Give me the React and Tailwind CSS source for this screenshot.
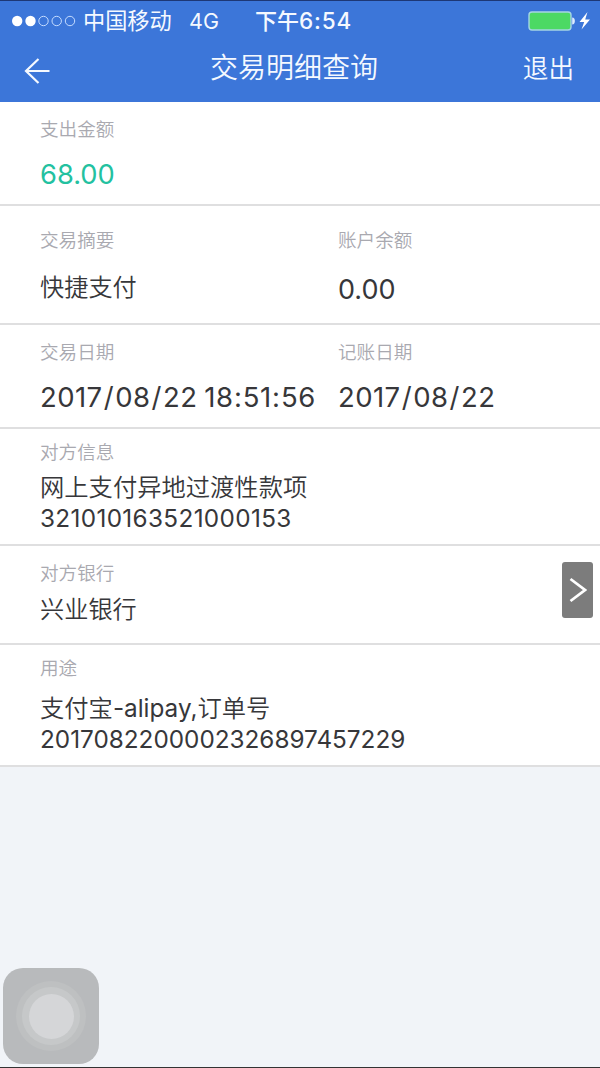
import React from 'react';

const Label = ({ children }) => (
  <div className="h-6 text-[18.6px] leading-6 font-[350] text-[#a9a9b0] whitespace-nowrap">{children}</div>
);

const Section = ({ className, children }) => (
  <section className={`relative border-b-2 border-[#dfdfe0] bg-white pl-10 ${className}`}>{children}</section>
);

// gives the slashes and colons a little more room than the digits
const DateText = ({ value }) => (
  <div className="mt-[17px] text-[27.5px] leading-8 tracking-[0.4px] [word-spacing:-1.2px] whitespace-nowrap">
    {value.split(/([/:])/).map((part, i) => (
      <span key={i} className={part === '/' ? 'mx-[1.2px]' : part === ':' ? 'mx-[0.6px]' : ''}>{part}</span>
    ))}
  </div>
);

const StatusBar = () => (
  <div className="flex h-10 items-center text-[22px] leading-10 whitespace-nowrap">
    <svg className="ml-3 shrink-0" width="64" height="12" viewBox="0 0 64 12" fill="none">
      <circle cx="5.2" cy="6" r="5.2" fill="#fff" />
      <circle cx="18.5" cy="6" r="5.2" fill="#fff" />
      <circle cx="31.5" cy="6" r="4.7" stroke="#c5dcff" />
      <circle cx="44.7" cy="6" r="4.7" stroke="#c5dcff" />
      <circle cx="58" cy="6" r="4.7" stroke="#c5dcff" />
    </svg>
    <span className="ml-[7px] w-[89px] text-[22.2px]">中国移动</span>
    <span className="ml-[17px] w-[66px] text-[21.5px]">4G</span>
    <span className="font-medium">
      下午<span className="text-[22.5px] tracking-[0.9px]">6:54</span>
    </span>
    <svg className="ml-auto mr-[8px] shrink-0" width="64" height="20" viewBox="0 0 64 20">
      <rect x="1" y="1" width="42" height="18" rx="3" fill="#4cd964" stroke="#a5d5e4" strokeWidth="1.4" />
      <path d="M44.2 6.5 C47.8 6.5 47.8 13.5 44.2 13.5 Z" fill="#dcebff" />
      <path d="M59.5 1 L51.5 11 H56.2 L53.5 18.5 L62 8.5 H57.2 Z" fill="#fff" />
    </svg>
  </div>
);

const Header = () => (
  <header className="h-[102px] border-t border-[#1d3775] bg-[#3c76d9] text-[#f5f9ff]">
    <StatusBar />
    <div className="grid h-[54px] grid-cols-[1fr_auto_1fr] items-center font-[350] whitespace-nowrap">
      <svg className="mt-1.5 ml-6" width="27" height="26" viewBox="0 0 27 26" fill="none" stroke="currentColor" strokeWidth="2.2">
        <path d="M25.5 13 H2 M14.5 1 L2 13 L14.5 25" />
      </svg>
      <h1 className="ml-[-12px] text-[28px] leading-9 font-[350]">交易明细查询</h1>
      <button className="mt-px mr-[26px] justify-self-end text-[25.6px] leading-9">退出</button>
    </div>
  </header>
);

export default function App() {
  return (
    <div className="relative flex h-[1068px] w-[600px] flex-col overflow-hidden border-b border-[#333] bg-[#f1f4f8] font-[Inter,'Noto_Sans_CJK_SC',sans-serif] text-[#37373a]">
      <Header />

      <main>
        <Section className="h-[104px] pt-[15px]">
          <Label>支出金额</Label>
          <div className="mt-[18px] text-[27.3px] leading-8 text-[#23c1a0]">68.00</div>
        </Section>

        <Section className="grid h-[119px] grid-cols-[298px_1fr] pt-[22px]">
          <div>
            <Label>交易摘要</Label>
            <div className="mt-5 text-[24.2px] leading-8 font-[350]">快捷支付</div>
          </div>
          <div>
            <Label>账户余额</Label>
            <div className="mt-[22px] text-[27px] leading-8">0.00</div>
          </div>
        </Section>

        <Section className="grid h-[104px] grid-cols-[298px_1fr] pt-[15px]">
          <div>
            <Label>交易日期</Label>
            <DateText value="2017/08/22 18:51:56" />
          </div>
          <div>
            <Label>记账日期</Label>
            <DateText value="2017/08/22" />
          </div>
        </Section>

        <Section className="h-[117px] pt-[11px]">
          <Label>对方信息</Label>
          <div className="mt-2 text-[24.3px] leading-[31px]">
            <p className="font-[350]">网上支付异地过渡性款项</p>
            <p className="tracking-[0.35px]">321010163521000153</p>
          </div>
        </Section>

        <Section className="h-[99px] pt-[15px]">
          <Label>对方银行</Label>
          <div className="mt-[9px] text-[24.2px] leading-[31px] font-[350]">兴业银行</div>
          {/* side drawer handle */}
          <button className="absolute top-4 right-[7px] flex h-14 w-[31px] items-center justify-center rounded-[3px] bg-[#7c7c7c]">
            <svg width="18" height="26" viewBox="0 0 18 26" fill="none" stroke="#fff" strokeWidth="2.8">
              <path d="M1.5 2 L16 13 L1.5 24" />
            </svg>
          </button>
        </Section>

        <Section className="h-[122px] pt-[11px]">
          <Label>用途</Label>
          <div className="mt-[13px] text-[24.3px] leading-[31px]">
            <p className="font-[350]">
              支付宝<span className="font-normal">-alipay,</span>订单号
            </p>
            <p>2017082200002326897457229</p>
          </div>
        </Section>
      </main>

      {/* floating assistive button */}
      <div className="absolute bottom-[3px] left-[3px] flex size-24 items-center justify-center rounded-[20px] bg-[#b8babc]">
        <div className="flex size-[70px] items-center justify-center rounded-full bg-[#bec0c1]">
          <div className="flex size-[58px] items-center justify-center rounded-full bg-[#c6c8c9]">
            <div className="size-[45px] rounded-full bg-[#d5d6d8]" />
          </div>
        </div>
      </div>
    </div>
  );
}
